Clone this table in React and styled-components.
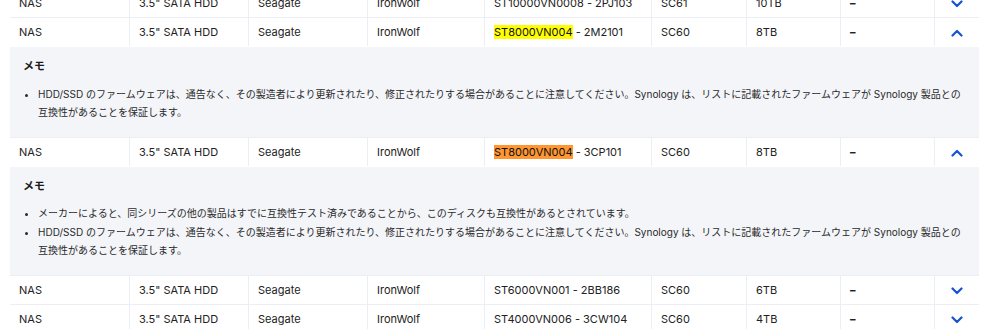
import React from "react";
import styled, { createGlobalStyle } from "styled-components";

const Global = createGlobalStyle`
  html, body { margin: 0; padding: 0; background: #ffffff; overflow: hidden; }
  body { font-family: "Inter", "Noto Sans CJK JP", sans-serif; color: #222; }
`;

const Page = styled.div`
  padding: 0 21px 0 10px;
  margin-top: -11px;
`;

const Table = styled.div`
  display: flex;
  flex-direction: column;
  width: 969px;
`;

const Row = styled.div`
  display: grid;
  grid-template-columns: 120px 119px 119px 117px 167px 95px 94px 94px 44px;
  height: 29px;
  box-sizing: border-box;
  border-bottom: 1px solid ${(p) => (p.$open ? "transparent" : "#ebeef4")};
  background: #fff;
`;

const Cell = styled.div`
  display: flex;
  align-items: center;
  padding-left: 9px;
  border-right: 1px solid #ebeef4;
  font-size: 11px;
  color: #222;
  white-space: nowrap;
  &:last-child {
    border-right: none;
    justify-content: center;
    padding-left: 0;
  }
`;

const CellText = styled.span`
  white-space: pre;
`;

const Mark = styled.span`
  background: ${(p) => (p.$current ? "#ff9632" : "#ffff00")};
  color: #111;
`;

const Dash = styled.span`
  font-weight: 800;
  font-size: 11px;
`;

const Panel = styled.div`
  background: #f4f5f9;
  padding: 12px 13px 15.5px;
  border-bottom: 1px solid #ebeef4;
`;

const Heading = styled.h4`
  margin: 0;
  font-size: 11px;
  line-height: 14px;
  font-weight: 700;
  color: #1b1b1b;
`;

const List = styled.ul`
  margin: 11.5px 0 0;
  padding-left: 15px;
`;

const Item = styled.li`
  font-size: 10px;
  line-height: 18.4px;
  color: #2a2a2a;
`;

const Chevron = ({ up }) => (
  <svg width="12" height="8" viewBox="0 0 12 8" style={{ marginTop: 2 }}>
    <polyline
      points={up ? "1.5,6.5 6,2 10.5,6.5" : "1.5,1.5 6,6 10.5,1.5"}
      fill="none"
      stroke="#1652d6"
      strokeWidth="2.2"
      strokeLinecap="round"
      strokeLinejoin="round"
    />
  </svg>
);

const rows = [
  { model: ["ST10000VN0008", " - 2PJ103"], fw: "SC61", cap: "10TB" },
  { model: ["ST8000VN004", " - 2M2101"], mark: "yellow", fw: "SC60", cap: "8TB", open: true,
    notes: [
      "HDD/SSD のファームウェアは、通告なく、その製造者により更新されたり、修正されたりする場合があることに注意してください。Synology は、リストに記載されたファームウェアが Synology 製品との互換性があることを保証します。",
    ] },
  { model: ["ST8000VN004", " - 3CP101"], mark: "orange", fw: "SC60", cap: "8TB", open: true,
    notes: [
      "メーカーによると、同シリーズの他の製品はすでに互換性テスト済みであることから、このディスクも互換性があるとされています。",
      "HDD/SSD のファームウェアは、通告なく、その製造者により更新されたり、修正されたりする場合があることに注意してください。Synology は、リストに記載されたファームウェアが Synology 製品との互換性があることを保証します。",
    ] },
  { model: ["ST6000VN001", " - 2BB186"], fw: "SC60", cap: "6TB" },
  { model: ["ST4000VN006", " - 3CW104"], fw: "SC60", cap: "4TB" },
];

export default function App() {
  return (
    <Page>
      <Global />
      <Table>
        {rows.map((r, i) => (
          <React.Fragment key={i}>
            <Row $open={r.open}>
              <Cell>NAS</Cell>
              <Cell>3.5" SATA HDD</Cell>
              <Cell>Seagate</Cell>
              <Cell>IronWolf</Cell>
              <Cell>
                <CellText>
                  {r.mark ? <Mark $current={r.mark === "orange"}>{r.model[0]}</Mark> : r.model[0]}
                  {r.model[1]}
                </CellText>
              </Cell>
              <Cell>{r.fw}</Cell>
              <Cell>{r.cap}</Cell>
              <Cell><Dash>–</Dash></Cell>
              <Cell><Chevron up={r.open} /></Cell>
            </Row>
            {r.open && (
              <Panel>
                <Heading>メモ</Heading>
                <List>
                  {r.notes.map((n, j) => (
                    <Item key={j}>{n}</Item>
                  ))}
                </List>
              </Panel>
            )}
          </React.Fragment>
        ))}
      </Table>
    </Page>
  );
}
